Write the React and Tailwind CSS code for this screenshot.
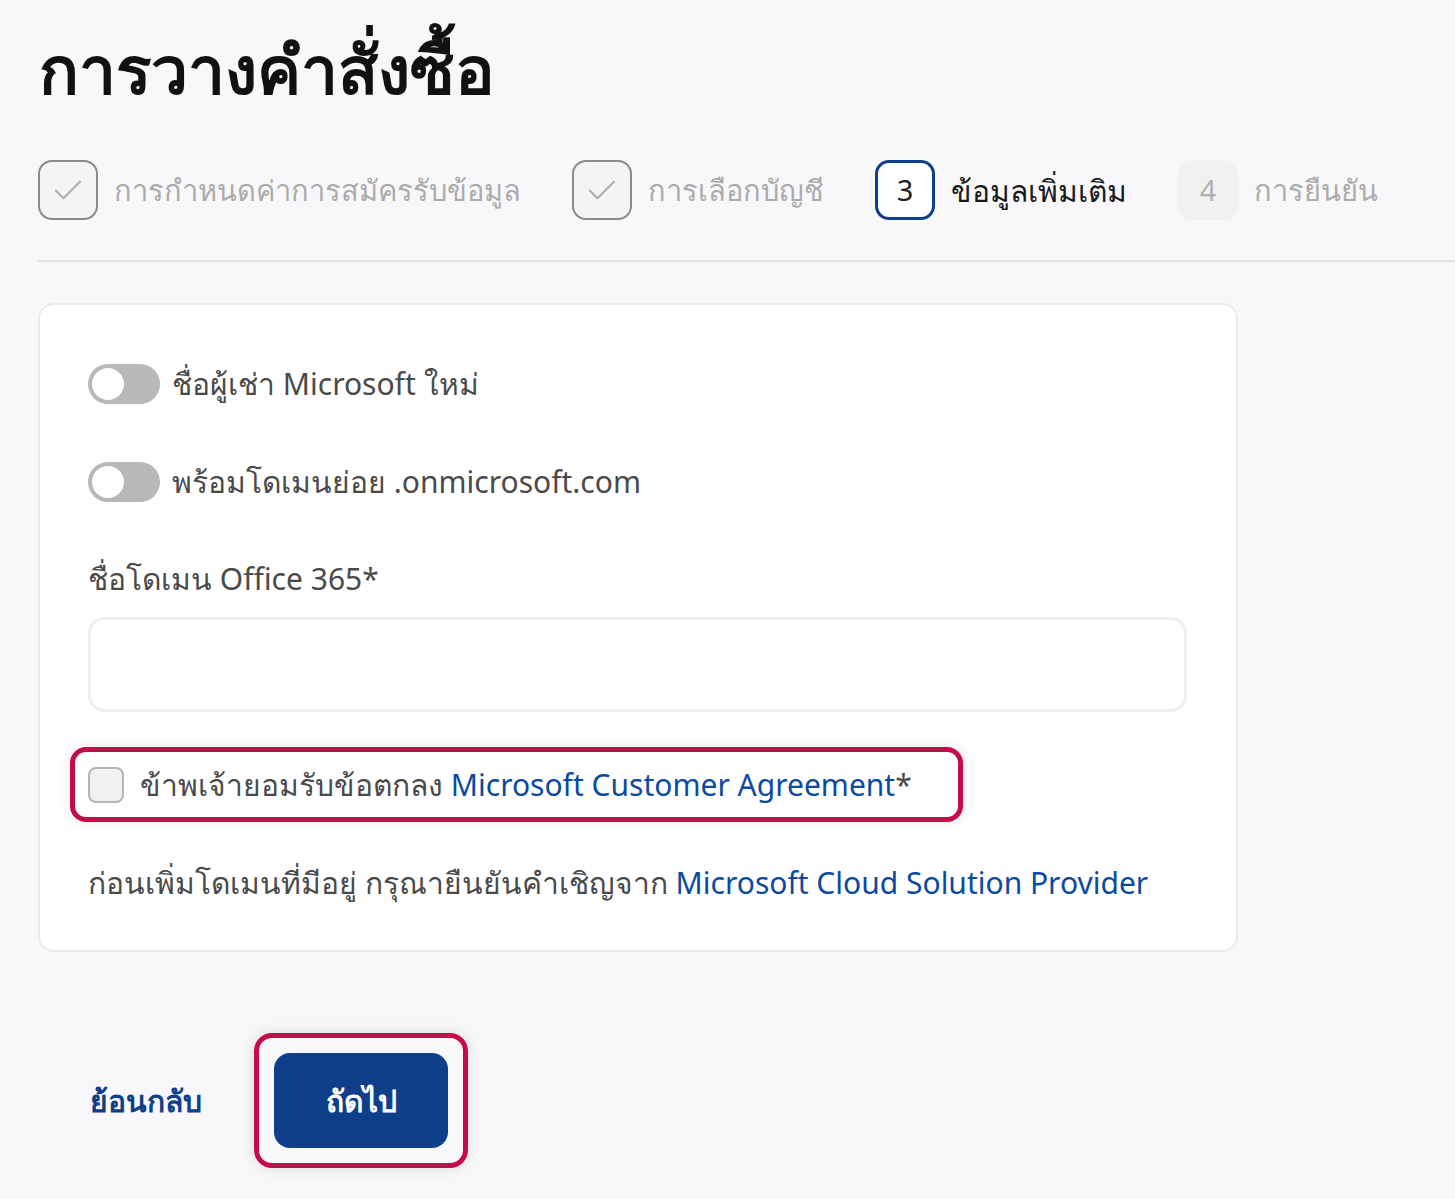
import React, { useState } from 'react';

const CheckIcon = () => (
  <svg width="36" height="36" viewBox="0 0 24 24" fill="none" stroke="#b0b0b0" strokeWidth="1.5" strokeLinecap="round" strokeLinejoin="round">
    <path d="M4 12.5l5 5L20 6.5" />
  </svg>
);

function Step({ state, num, label }) {
  if (state === 'done') {
    return (
      <div className="flex items-center gap-4">
        <div className="w-[60px] h-[60px] rounded-[14px] border-2 border-[#8a8a8a] bg-[#f4f4f5] flex items-center justify-center">
          <CheckIcon />
        </div>
        <span className="text-[29px] text-[#ababab]">{label}</span>
      </div>
    );
  }
  if (state === 'active') {
    return (
      <div className="flex items-center gap-4">
        <div className="w-[60px] h-[60px] rounded-[14px] border-[3px] border-[#0f3f8a] bg-white flex items-center justify-center text-[29px] text-[#222]">
          {num}
        </div>
        <span className="text-[30px] text-[#1a1a1a] font-medium">{label}</span>
      </div>
    );
  }
  return (
    <div className="flex items-center gap-4">
      <div className="w-[60px] h-[60px] rounded-[14px] bg-[#f1f1f2] flex items-center justify-center text-[29px] text-[#b0b0b0]">
        {num}
      </div>
      <span className="text-[29px] text-[#ababab]">{label}</span>
    </div>
  );
}

function Toggle({ label }) {
  const [on, setOn] = useState(false);
  return (
    <label className="flex items-center gap-3 cursor-pointer h-[40px]">
      <button
        type="button"
        onClick={() => setOn(!on)}
        className={`w-[72px] h-[40px] rounded-full p-[4px] flex items-center ${on ? 'bg-[#0f3f8a] justify-end' : 'bg-[#b8b8b8] justify-start'}`}
      >
        <span className="w-[32px] h-[32px] rounded-full bg-white" />
      </button>
      <span className="text-[30px] leading-[40px] text-[#4a4a4a]">{label}</span>
    </label>
  );
}

export default function App() {
  const [domain, setDomain] = useState('');
  const [agree, setAgree] = useState(false);

  return (
    <div className="min-h-screen bg-[#f8f8fa] pt-[26px] pl-[38px] font-['Noto_Sans','Liberation_Sans',sans-serif]">
      <h1 className="text-[66px] font-bold text-[#111] leading-[84px] pl-[1px]">การวางคำสั่งซื้อ</h1>

      <div className="mt-[50px] flex items-center gap-[51px] pb-[40px] border-b-2 border-[#e2e2e4]">
        <Step state="done" label="การกำหนดค่าการสมัครรับข้อมูล" />
        <Step state="done" label="การเลือกบัญชี" />
        <Step state="active" num="3" label="ข้อมูลเพิ่มเติม" />
        <Step state="todo" num="4" label="การยืนยัน" />
      </div>

      <div className="mt-[41px] w-[1200px] bg-white border-2 border-[#ebebed] rounded-[16px] px-[48px] pt-[59px] pb-[45px]">
        <div className="flex flex-col gap-[58px]">
          <Toggle label="ชื่อผู้เช่า Microsoft ใหม่" />
          <Toggle label="พร้อมโดเมนย่อย .onmicrosoft.com" />
        </div>

        <div className="mt-[54px] text-[30px] text-[#4a4a4a]">ชื่อโดเมน Office 365*</div>
        <input
          value={domain}
          onChange={(e) => setDomain(e.target.value)}
          className="mt-[16px] block w-[1099px] h-[95px] rounded-[16px] border-[3px] border-[#eceef2] bg-white px-5 text-[28px] outline-none"
        />

        <div className="mt-[35px] -ml-[18px] w-[893px] h-[75px] rounded-[16px] border-[5px] border-[#c60c46] shadow-[0_0_14px_rgba(0,0,0,0.10)] flex items-center pl-[13px] gap-4">
          <button
            type="button"
            onClick={() => setAgree(!agree)}
            className={`w-[36px] h-[36px] rounded-[8px] border-2 ${agree ? 'bg-[#0f3f8a] border-[#0f3f8a]' : 'bg-[#f1f1f3] border-[#b5b5b5]'}`}
          />
          <span className="text-[30px] text-[#4a4a4a]">
            ข้าพเจ้ายอมรับข้อตกลง <span className="text-[#0b4aa2]">Microsoft Customer Agreement</span>*
          </span>
        </div>

        <p className="mt-[38px] text-[30px] text-[#4a4a4a]">
          ก่อนเพิ่มโดเมนที่มีอยู่ กรุณายืนยันคำเชิญจาก <span className="text-[#0b4aa2]">Microsoft Cloud Solution Provider</span>
        </p>
      </div>

      <div className="mt-[81px] flex items-center gap-[52px] pb-[32px]">
        <button type="button" className="ml-[52px] text-[30px] font-semibold text-[#0f3f8a]">ย้อนกลับ</button>
        <div className="p-[15px] rounded-[18px] border-[5px] border-[#c60c46] shadow-[0_0_14px_rgba(0,0,0,0.12)]">
          <button type="button" className="w-[174px] h-[95px] rounded-[16px] bg-[#0f3f8a] text-white text-[30px] font-semibold">ถัดไป</button>
        </div>
      </div>
    </div>
  );
}
